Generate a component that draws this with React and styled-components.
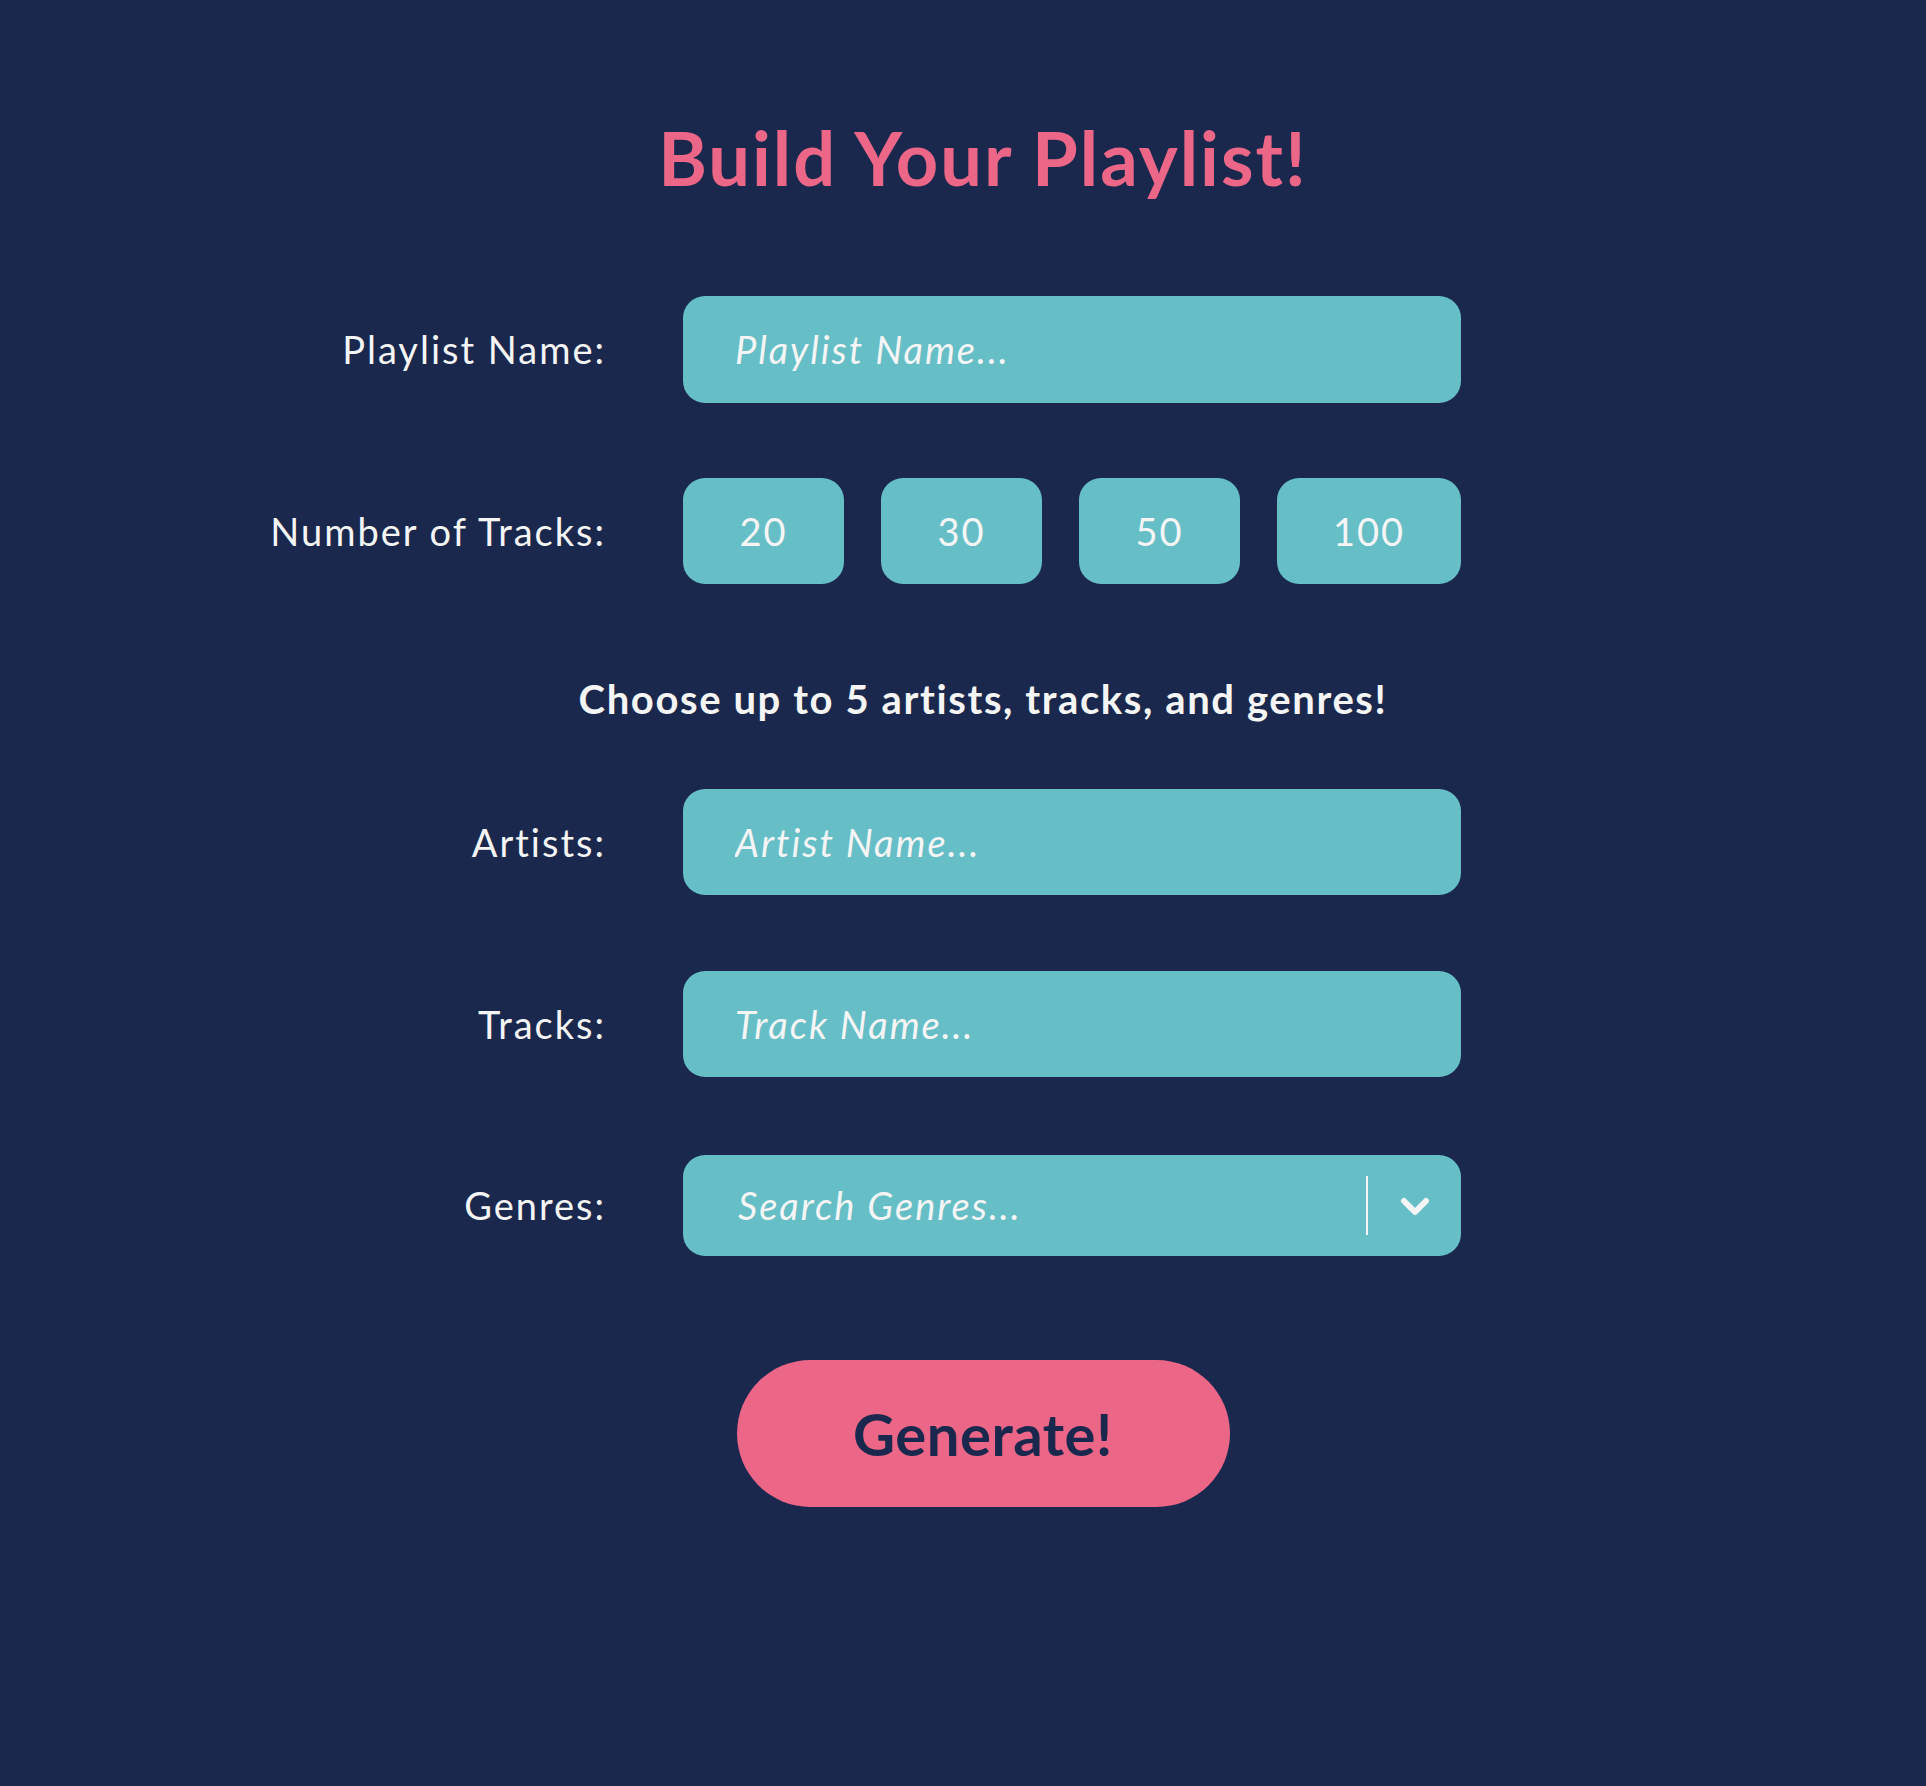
import React from "react";
import styled, { createGlobalStyle } from "styled-components";

const colors = {
  navy: "#1a284d",
  teal: "#66bec6",
  pink: "#ec6687",
  white: "#f5f5f5"
};

const GlobalStyle = createGlobalStyle`
  html, body {
    margin: 0;
    padding: 0;
    background: ${colors.navy};
  }
  body {
    font-family: Futura, Lato, "DejaVu Sans", sans-serif;
    min-height: 1786px;
  }
`;

const Page = styled.div`
  padding: 114px 0 200px 40px;
  display: flex;
  flex-direction: column;
`;

const Title = styled.h1`
  margin: 0;
  color: ${colors.pink};
  font-size: 74px;
  font-weight: 700;
  line-height: 1.2;
  letter-spacing: 2px;
  text-align: center;
`;

const Row = styled.div`
  display: grid;
  grid-template-columns: 336px 778px;
  column-gap: 80px;
  align-items: center;
  margin-left: 227px;
  margin-top: ${p => p.top}px;
`;

const Label = styled.label`
  color: ${colors.white};
  font-size: 38px;
  letter-spacing: 2px;
  text-align: right;
  white-space: nowrap;
  margin-right: -3px;
`;

const TextInput = styled.input`
  box-sizing: border-box;
  height: ${p => p.h || 107}px;
  width: 100%;
  border: none;
  outline: none;
  border-radius: 22px;
  background: ${colors.teal};
  padding: 0 52px;
  font-family: inherit;
  font-size: 38px;
  letter-spacing: 2px;
  color: ${colors.white};
  &::placeholder {
    color: ${colors.white};
    font-style: italic;
    opacity: 1;
  }
`;

const Counts = styled.div`
  display: grid;
  grid-template-columns: 161px 161px 161px 1fr;
  gap: 37px;
`;

const CountButton = styled.button`
  height: 106px;
  border: none;
  border-radius: 22px;
  background: ${colors.teal};
  color: ${colors.white};
  font-family: inherit;
  font-size: 38px;
  letter-spacing: 2px;
  cursor: pointer;
`;

const Subheading = styled.p`
  margin: 91px 0 0;
  color: ${colors.white};
  font-size: 40px;
  font-weight: 700;
  line-height: 1.2;
  letter-spacing: 1.6px;
  text-align: center;
`;

const Select = styled.div`
  box-sizing: border-box;
  height: 101px;
  border-radius: 22px;
  background: ${colors.teal};
  display: flex;
  align-items: center;
  padding-left: 55px;
`;

const SelectText = styled.span`
  flex: 1;
  color: ${colors.white};
  font-size: 38px;
  font-style: italic;
  letter-spacing: 2px;
`;

const Separator = styled.span`
  width: 2px;
  height: 59px;
  background: ${colors.white};
`;

const Indicator = styled.span`
  width: 93px;
  display: flex;
  justify-content: center;
  align-items: center;
  padding-top: 3px;
  color: ${colors.white};
`;

const Generate = styled.button`
  align-self: center;
  margin-top: 104px;
  width: 493px;
  height: 147px;
  border: none;
  border-radius: 74px;
  background: ${colors.pink};
  color: ${colors.navy};
  font-family: inherit;
  font-size: 58px;
  font-weight: 700;
  letter-spacing: 0.5px;
  cursor: pointer;
`;

const Chevron = () => (
  <svg width="32" height="20" viewBox="0 0 32 20">
    <path
      d="M5 4 L16 15 L27 4"
      fill="none"
      stroke="currentColor"
      strokeWidth="6"
      strokeLinecap="round"
      strokeLinejoin="round"
    />
  </svg>
);

const App = () => (
  <Page>
    <GlobalStyle />
    <Title>Build Your Playlist!</Title>

    <Row top={93}>
      <Label>Playlist Name:</Label>
      <TextInput placeholder="Playlist Name..." />
    </Row>

    <Row top={75}>
      <Label>Number of Tracks:</Label>
      <Counts>
        {[20, 30, 50, 100].map(n => (
          <CountButton key={n}>{n}</CountButton>
        ))}
      </Counts>
    </Row>

    <Subheading>Choose up to 5 artists, tracks, and genres!</Subheading>

    <Row top={66}>
      <Label>Artists:</Label>
      <TextInput h={106} placeholder="Artist Name..." />
    </Row>

    <Row top={76}>
      <Label>Tracks:</Label>
      <TextInput h={106} placeholder="Track Name..." />
    </Row>

    <Row top={78}>
      <Label>Genres:</Label>
      <Select>
        <SelectText>Search Genres...</SelectText>
        <Separator />
        <Indicator>
          <Chevron />
        </Indicator>
      </Select>
    </Row>

    <Generate>Generate!</Generate>
  </Page>
);

export default App;
